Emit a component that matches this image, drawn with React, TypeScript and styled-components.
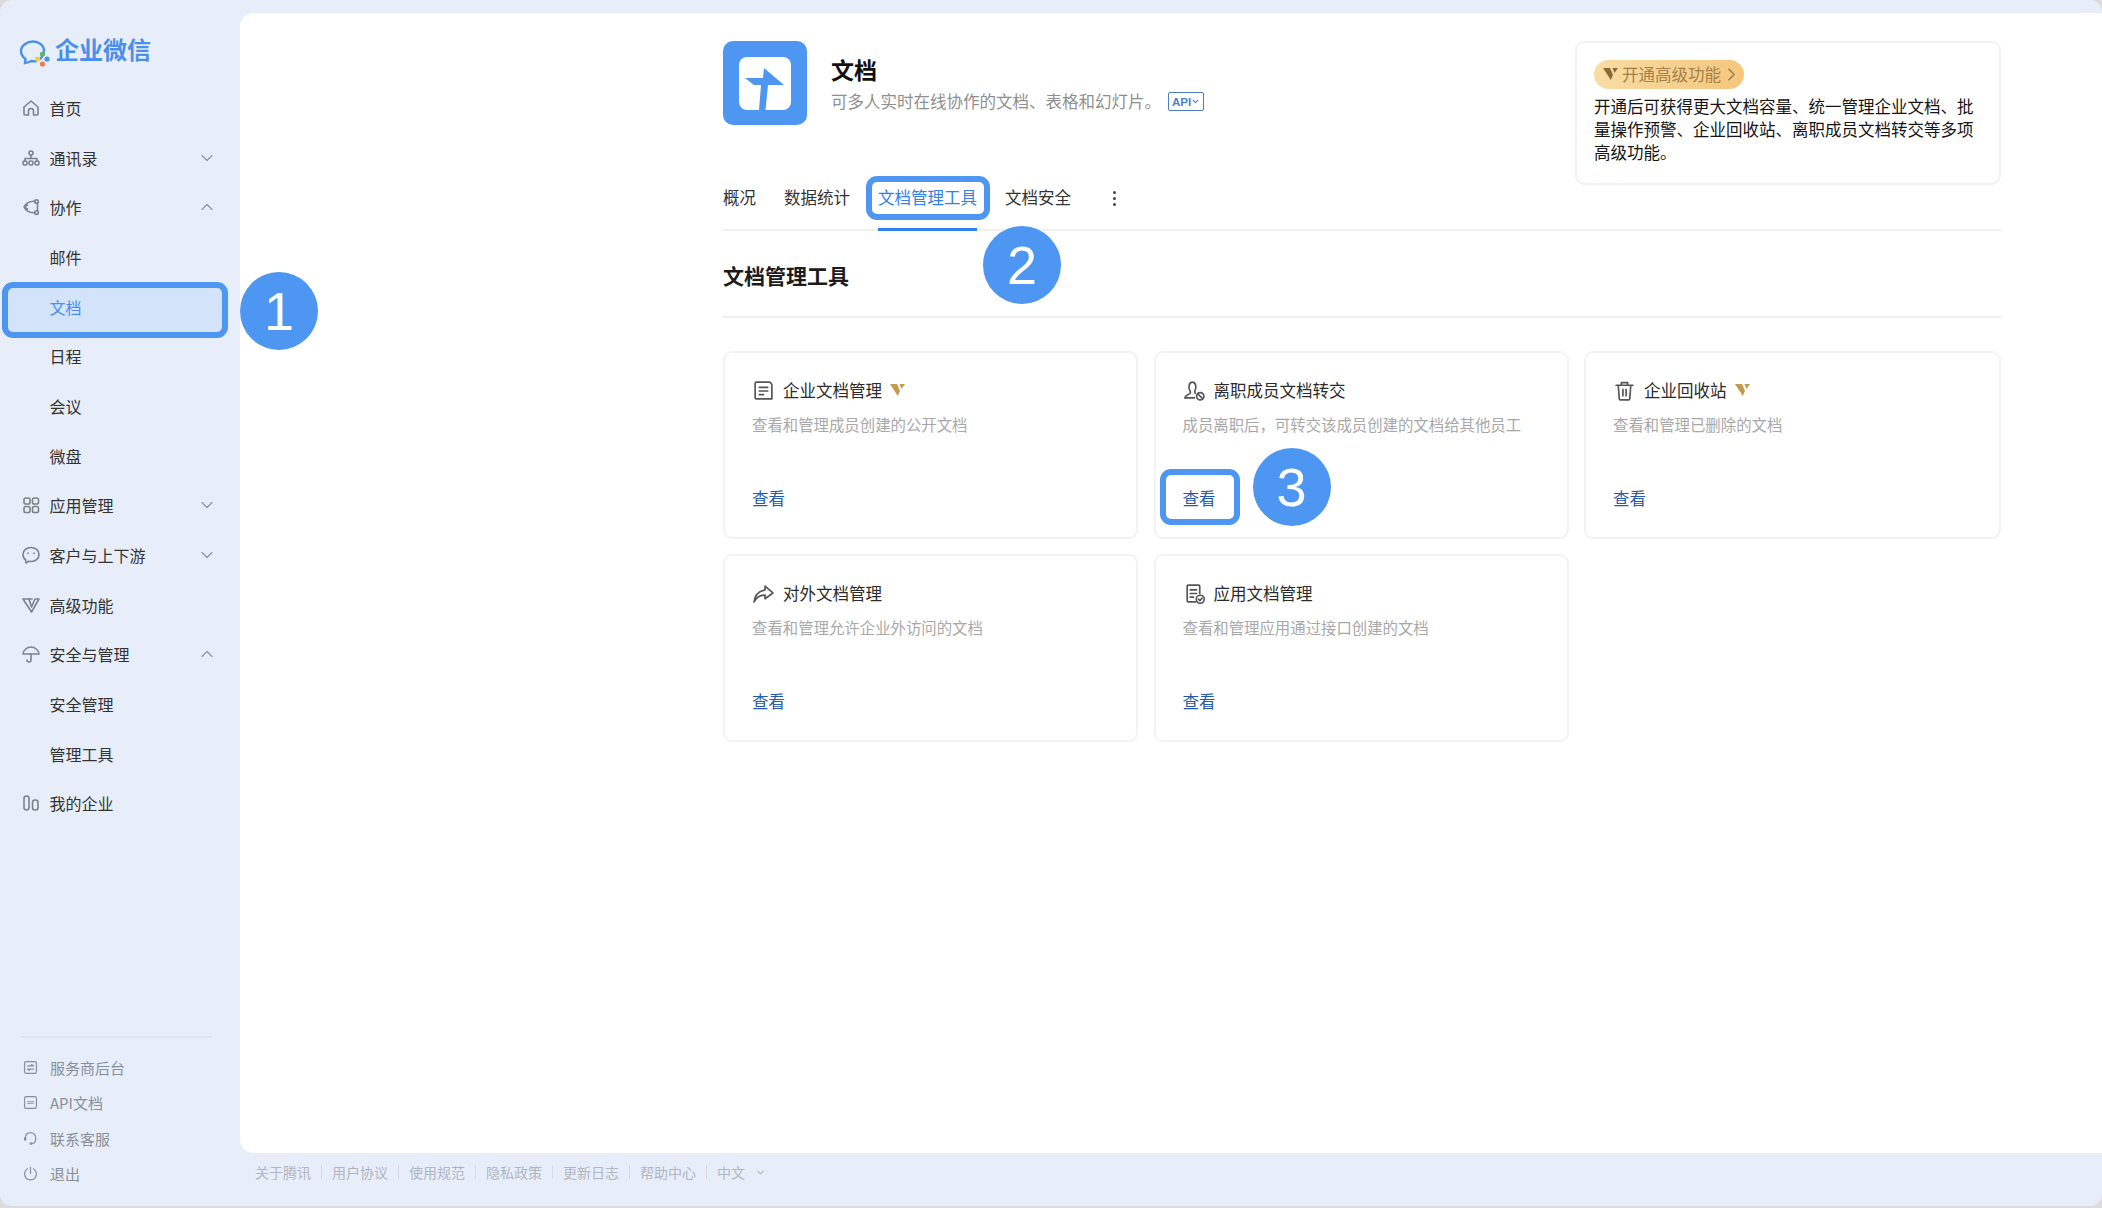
import styled, { createGlobalStyle } from "styled-components"
import { ChevronDown, ChevronUp, ChevronRight } from "lucide-react"
import { Fragment } from "react"
import type { ReactNode } from "react"

const GlobalStyle = createGlobalStyle`
    html, body {
        margin: 0;
        padding: 0;
        background: #dcdcdc;
    }
    * {
        box-sizing: border-box;
    }
    body {
        font-family: "Noto Sans CJK SC", "Liberation Sans", sans-serif;
    }
`

const BLUE = "#4d96f2"

const Shell = styled.div`
    width: 2102px;
    height: 1206px;
    display: grid;
    grid-template-columns: 240px 1fr;
    background: #e7eefa;
    border-radius: 12px;
`

const Sidebar = styled.aside`
    display: flex;
    flex-direction: column;
    padding-bottom: 15px;
`

const Brand = styled.div`
    height: 83px;
    padding: 20px 0 0 18px;
    display: flex;
    align-items: flex-start;
    gap: 3px;
    color: #4a8fe9;
    font-size: 24px;
    font-weight: 700;
    line-height: 64px;
    svg {
        margin-top: 19px;
    }
    span {
        margin-top: -3px;
    }
`

const NavRow = styled.div`
    position: relative;
    height: 49.7px;
    display: flex;
    align-items: center;
    padding-left: 49.5px;
    font-size: 16px;
    color: #333;
    > svg:first-child {
        position: absolute;
        left: 20.5px;
    }
`

const NavLabel = styled.span<{ $active?: boolean }>`
    position: relative;
    z-index: 1;
    color: ${props => props.$active ? "#4a8fe9" : "#333"};
`

const NavChevron = styled.span`
    position: absolute;
    left: 197px;
    display: flex;
    color: #8d929b;
`

const SideBottom = styled.div`
    margin-top: auto;
    margin-left: 21px;
    width: 191px;
    border-top: 2px solid #dfe4ee;
    padding-top: 12px;
`

const SideLink = styled.div`
    height: 35.3px;
    display: flex;
    align-items: center;
    gap: 11px;
    margin-left: 1px;
    font-size: 15px;
    color: #8a8f99;
`

const Content = styled.div`
    display: flex;
    flex-direction: column;
    padding-top: 13px;
`

const Panel = styled.main`
    flex: 1;
    background: #fff;
    border-radius: 14px 0 0 14px;
    padding: 28px 0 0 483px;
`

const Column = styled.div`
    width: 1278px;
`

const Header = styled.header`
    height: 135px;
    display: flex;
    justify-content: space-between;
    align-items: flex-start;
`

const AppInfo = styled.div`
    display: flex;
    gap: 24px;
`

const AppLogo = styled.div`
    width: 84px;
    height: 84px;
    border-radius: 10px;
    background: ${BLUE};
    display: flex;
    align-items: center;
    justify-content: center;
`

const AppTitle = styled.h1`
    margin: 10.5px 0 0;
    font-size: 23px;
    line-height: 34px;
    font-weight: 700;
    color: #111;
`

const AppDesc = styled.p`
    margin: 2px 0 0;
    display: flex;
    align-items: center;
    gap: 7px;
    font-size: 16.5px;
    line-height: 26px;
    color: #8f8f8f;
`

const ApiBadge = styled.span`
    width: 36px;
    height: 19px;
    margin-top: 2px;
    display: inline-flex;
    align-items: center;
    justify-content: center;
    border: 1.5px solid #4a7fc4;
    border-radius: 2px;
    color: #4a7fc4;
    font-size: 11.5px;
    font-weight: 700;
    font-family: "Liberation Sans", sans-serif;
`

const PremiumCard = styled.aside`
    width: 426px;
    height: 144px;
    padding: 17px 16px 0 17px;
    border: 2px solid #f2f2f2;
    border-radius: 9px;
`

const PremiumPill = styled.div`
    width: 150px;
    height: 29px;
    display: flex;
    align-items: center;
    gap: 3px;
    padding: 0 0 2px 9px;
    border-radius: 15px;
    background: linear-gradient(90deg, #f9dca5, #f4c77c);
    color: #a5824a;
    font-size: 16.5px;
    white-space: nowrap;
    svg:last-child {
        margin-left: -3px;
        margin-top: 2px;
    }
`

const PremiumText = styled.p`
    margin: 6px 0 0;
    font-size: 16.5px;
    line-height: 23px;
    color: #151515;
`

const TabBar = styled.nav`
    height: 55px;
    display: flex;
    gap: 28px;
    border-bottom: 2px solid #f0f0f0;
`

const Tab = styled.div<{ $active?: boolean }>`
    position: relative;
    height: 55px;
    line-height: 43px;
    font-size: 16.5px;
    color: ${props => props.$active ? "#2f81ed" : "#333"};
    border-bottom: 3px solid ${props => props.$active ? "#2f81ed" : "transparent"};
`

const TabDots = styled.div`
    margin-left: 14px;
    height: 44px;
    display: flex;
    flex-direction: column;
    justify-content: center;
    gap: 3px;
    i {
        width: 3px;
        height: 3px;
        border-radius: 50%;
        background: #444;
    }
`

const SectionTitle = styled.h2`
    margin: 0;
    height: 87px;
    padding-top: 26.5px;
    font-size: 21px;
    line-height: 34px;
    font-weight: 700;
    color: #1c1c1c;
    border-bottom: 2px solid #f0f0f0;
`

const CardGrid = styled.div`
    margin-top: 33px;
    display: grid;
    grid-template-columns: 415px 415px 1fr;
    grid-auto-rows: 188px;
    gap: 15px 15.5px;
`

const Card = styled.article`
    display: flex;
    flex-direction: column;
    padding: 25px 27px 27px 27px;
    border: 2px solid #f3f3f3;
    border-radius: 9px;
`

const CardTitle = styled.div`
    height: 24px;
    display: flex;
    align-items: center;
    gap: 8px;
    font-size: 16.5px;
    color: #2b2b2b;
    svg {
        flex-shrink: 0;
    }
`

const CardDesc = styled.p`
    margin: 10px 0 0;
    font-size: 15.4px;
    line-height: 24px;
    color: #a8a8a8;
`

const CardLink = styled.a`
    position: relative;
    margin-top: auto;
    width: 33px;
    font-size: 16.5px;
    line-height: 24px;
    color: #245aa8;
`

const Ring = styled.span<{ $top: number; $left: number; $width: number; $height: number; $fill?: string }>`
    position: absolute;
    top: ${props => props.$top}px;
    left: ${props => props.$left}px;
    width: ${props => props.$width}px;
    height: ${props => props.$height}px;
    border: 6px solid ${BLUE};
    border-radius: 11px;
    background: ${props => props.$fill || "transparent"};
`

const Marker = styled.span<{ $top: number; $left: number }>`
    position: absolute;
    z-index: 2;
    top: ${props => props.$top}px;
    left: ${props => props.$left}px;
    width: 78px;
    height: 78px;
    border-radius: 50%;
    background: ${BLUE};
    color: #fff;
    display: flex;
    align-items: center;
    justify-content: center;
    font-family: "Liberation Sans", sans-serif;
    font-size: 54px;
    line-height: 1;
`

const Footer = styled.footer`
    height: 53px;
    display: flex;
    align-items: center;
    gap: 10px;
    padding: 0 0 16px 15px;
    font-size: 14px;
    color: #b1b6c0;
    svg {
        color: #8a8f99;
        margin-top: 2px;
    }
`

const FooterSep = styled.i`
    width: 1px;
    height: 14px;
    background: #d5dae3;
`

const iconProps = {
    width: 20,
    height: 20,
    viewBox: "0 0 20 20",
    fill: "none",
    stroke: "#7d8289",
    strokeWidth: 1.6,
    strokeLinecap: "round" as const,
    strokeLinejoin: "round" as const,
}

const navIcons: Record<string, ReactNode> = {
    home: <svg {...iconProps}><path d="M3 9 10 3l7 6v7a1 1 0 0 1-1 1h-3.500v-4a2.500 2.500 0 0 0-5 0v4H4a1 1 0 0 1-1-1z" /></svg>,
    org: <svg {...iconProps}><circle cx="10" cy="5" r="2" /><path d="M10 7v3M4 13v-2.500h12V13" /><rect x="2" y="13" width="4" height="4" rx="1.500" /><rect x="8" y="13" width="4" height="4" rx="1.500" /><rect x="14" y="13" width="4" height="4" rx="1.500" /></svg>,
    share: <svg {...iconProps}><circle cx="15.500" cy="4.500" r="1.800" /><circle cx="15.500" cy="15.500" r="1.800" /><path d="M13.800 4.200C9 4 5 6 3 10c2 4 6 6 10.800 5.800M3 10l3.500-2M3 10l3.500 2" /><path d="M16.500 6.500v7" /></svg>,
    apps: <svg {...iconProps}><rect x="3" y="3" width="6" height="6" rx="1.800" /><rect x="11.500" y="3" width="6" height="6" rx="1.800" /><rect x="3" y="11.500" width="6" height="6" rx="1.800" /><rect x="11.500" y="11.500" width="6" height="6" rx="1.800" /></svg>,
    chat: <svg {...iconProps}><path d="M10 2.500c4.400 0 8 2.900 8 7s-3.600 7-8 7c-.8 0-1.500-.1-2.200-.3L5 18l-.3-3C3 13.700 2 11.800 2 9.500c0-4.100 3.600-7 8-7z" /><path d="M7 8v.5M13 8v.5" /></svg>,
    vip: <svg {...iconProps}><path d="M2 4h6l2.500 8L14 4h4l-7.500 13z" /><path d="M8 4l3 0" /></svg>,
    umbrella: <svg {...iconProps}><path d="M2 10c.5-4 4-7 8-7s7.500 3 8 7H2z" /><path d="M10 10v6a2 2 0 0 1-4 0" /></svg>,
    bars: <svg {...iconProps}><rect x="3" y="3" width="5" height="14" rx="2.500" /><rect x="11.500" y="7" width="5.500" height="10" rx="2.500" /></svg>,
}

const smallProps = { ...iconProps, width: 17, height: 17, stroke: "#8a8f99", strokeWidth: 1.4 }

const sideIcons: Record<string, ReactNode> = {
    service: <svg {...smallProps}><rect x="3" y="3" width="14" height="14" rx="2" /><path d="M6.500 8h7M6.500 12h7M11 6.500 13.500 8M9 13.500 6.500 12" /></svg>,
    api: <svg {...smallProps}><rect x="3" y="3" width="14" height="14" rx="2" /><path d="M6.500 9h7M6.500 11h7" strokeWidth="1" /></svg>,
    support: <svg {...smallProps}><path d="M4 11V9a6 6 0 0 1 12 0v2" /><path d="M16 11c0 3-2 5-4.500 5" /><circle cx="10.500" cy="16" r="1" /><rect x="3" y="9" width="1.500" height="3" rx=".7" /></svg>,
    power: <svg {...smallProps}><path d="M6.500 4.500a7 7 0 1 0 7 0M10 2.500V10" /></svg>,
}

const cardIconProps = { ...iconProps, width: 23, height: 23, viewBox: "0 0 22 22", stroke: "#555" }

const cardIcons: Record<string, ReactNode> = {
    doc: <svg {...cardIconProps}><path d="M4 3h13l2 2v14H4a1 1 0 0 1-1-1V4a1 1 0 0 1 1-1z" /><path d="M7 8h8M7 11.500h8M7 15h4" /></svg>,
    leave: <svg {...cardIconProps}><path d="M2 18c0-2.500 3-3 4.500-4 .8-.6.7-1.800 0-3C5 9 5.500 3 9 3s4 6 2.500 8c-.6 1-.5 2 .2 2.800" /><path d="M2 18h9" /><circle cx="16.500" cy="16.500" r="3.500" /><path d="m14.200 14.500 4.500 4" /></svg>,
    trash: <svg {...cardIconProps}><path d="M3 6h16M8 6V3.500h6V6M5 6l1 13a1 1 0 0 0 1 1h8a1 1 0 0 0 1-1l1-13M9.500 10v6M12.500 10v6" /></svg>,
    forward: <svg {...cardIconProps}><path d="M12.500 4 20 10.500 12.500 16v-3.500C8 12.500 4.500 14 2 19c.5-6 4-10 10.500-11.500z" /></svg>,
    appDoc: <svg {...cardIconProps}><path d="M12 19H5a1 1 0 0 1-1-1V4a1 1 0 0 1 1-1h10a1 1 0 0 1 1 1v7" /><path d="M7 7.500h6M7 11h6M7 14.500h3" /><circle cx="16.500" cy="16.500" r="3.800" /><path d="m14.800 16.500 1.300 1.300 2.100-2.300" /></svg>,
}

function VipMark({ color = "#c49a4e" }: { color?: string }) {
    return (
        <svg width="16" height="14" viewBox="0 0 16 14">
            <path d="M0 1h7l3 7-2.200 5z" fill={color} />
            <path d="M9.500 1H15l-3.400 5z" fill={color} />
        </svg>
    )
}

function BrandLogo() {
    return (
        <svg width="34" height="30" viewBox="0 0 34 30" fill="none">
            <path d="M22 20c2-2 4-4.500 4-8 0-5.500-5-9.500-11-9.500S3 6.500 3 12c0 3.500 1.800 6 4.500 8L7 24c3-.3 5-1.500 6-2 2 .4 3 .4 5 .2" stroke="#4a8fe9" strokeWidth="2.400" strokeLinecap="round" />
            <circle cx="19.500" cy="20" r="2.600" fill="#f4cc45" />
            <circle cx="24.500" cy="15" r="2.600" fill="#5cb85c" />
            <circle cx="29" cy="20" r="2.600" fill="#4a8fe9" />
            <circle cx="24.500" cy="25" r="2.600" fill="#ee7b4a" />
        </svg>
    )
}

type NavItem = { label: string; icon?: string; open?: boolean }

const navItems: NavItem[] = [
    { label: "首页", icon: "home" },
    { label: "通讯录", icon: "org", open: false },
    { label: "协作", icon: "share", open: true },
    { label: "邮件" },
    { label: "文档" },
    { label: "日程" },
    { label: "会议" },
    { label: "微盘" },
    { label: "应用管理", icon: "apps", open: false },
    { label: "客户与上下游", icon: "chat", open: false },
    { label: "高级功能", icon: "vip" },
    { label: "安全与管理", icon: "umbrella", open: true },
    { label: "安全管理" },
    { label: "管理工具" },
    { label: "我的企业", icon: "bars" },
]

const sideLinks = [
    { label: "服务商后台", icon: "service" },
    { label: "API文档", icon: "api" },
    { label: "联系客服", icon: "support" },
    { label: "退出", icon: "power" },
]

const cards = [
    { title: "企业文档管理", icon: "doc", vip: true, desc: "查看和管理成员创建的公开文档" },
    { title: "离职成员文档转交", icon: "leave", desc: "成员离职后，可转交该成员创建的文档给其他员工", marked: true },
    { title: "企业回收站", icon: "trash", vip: true, desc: "查看和管理已删除的文档" },
    { title: "对外文档管理", icon: "forward", desc: "查看和管理允许企业外访问的文档" },
    { title: "应用文档管理", icon: "appDoc", desc: "查看和管理应用通过接口创建的文档" },
]

const footerLinks = ["关于腾讯", "用户协议", "使用规范", "隐私政策", "更新日志", "帮助中心"]

export default function App() {
    return (
        <>
            <GlobalStyle />
            <Shell>
                <Sidebar>
                    <Brand>
                        <BrandLogo />
                        <span>企业微信</span>
                    </Brand>
                    {navItems.map(item => (
                        <NavRow key={item.label}>
                            {item.icon && navIcons[item.icon]}
                            {item.label === "文档" && (
                                <>
                                    <Ring $top={0.5} $left={2} $width={226} $height={56} $fill="#d3e3fa" />
                                    <Marker $top={-10} $left={240}>1</Marker>
                                </>
                            )}
                            <NavLabel $active={item.label === "文档"}>{item.label}</NavLabel>
                            {item.open !== undefined && (
                                <NavChevron>
                                    {item.open ? <ChevronUp size={20} strokeWidth={1.4} /> : <ChevronDown size={20} strokeWidth={1.4} />}
                                </NavChevron>
                            )}
                        </NavRow>
                    ))}
                    <SideBottom>
                        {sideLinks.map(link => (
                            <SideLink key={link.label}>
                                {sideIcons[link.icon]}
                                {link.label}
                            </SideLink>
                        ))}
                    </SideBottom>
                </Sidebar>
                <Content>
                    <Panel>
                        <Column>
                            <Header>
                                <AppInfo>
                                    <AppLogo>
                                        <svg width="52" height="53" viewBox="0 0 52 53">
                                            <rect width="52" height="53" rx="8" fill="#fff" />
                                            <path d="M25 11 45 28H29l-2.500 25H20l2-25-7 0L6 21l18 0z" fill={BLUE} />
                                        </svg>
                                    </AppLogo>
                                    <div>
                                        <AppTitle>文档</AppTitle>
                                        <AppDesc>
                                            可多人实时在线协作的文档、表格和幻灯片。
                                            <ApiBadge>API<ChevronDown size={9} strokeWidth={3} /></ApiBadge>
                                        </AppDesc>
                                    </div>
                                </AppInfo>
                                <PremiumCard>
                                    <PremiumPill>
                                        <VipMark color="#8a6a35" />
                                        开通高级功能
                                        <ChevronRight size={21} strokeWidth={2} />
                                    </PremiumPill>
                                    <PremiumText>
                                        开通后可获得更大文档容量、统一管理企业文档、批量操作预警、企业回收站、离职成员文档转交等多项高级功能。
                                    </PremiumText>
                                </PremiumCard>
                            </Header>
                            <TabBar>
                                <Tab>概况</Tab>
                                <Tab>数据统计</Tab>
                                <Tab $active>
                                    文档管理工具
                                    <Ring $top={0} $left={-12} $width={124} $height={44} />
                                    <Marker $top={50} $left={105}>2</Marker>
                                </Tab>
                                <Tab>文档安全</Tab>
                                <TabDots><i /><i /><i /></TabDots>
                            </TabBar>
                            <SectionTitle>文档管理工具</SectionTitle>
                            <CardGrid>
                                {cards.map(card => (
                                    <Card key={card.title}>
                                        <CardTitle>
                                            {cardIcons[card.icon]}
                                            {card.title}
                                            {card.vip && <VipMark />}
                                        </CardTitle>
                                        <CardDesc>{card.desc}</CardDesc>
                                        <CardLink>
                                            查看
                                            {card.marked && (
                                                <>
                                                    <Ring $top={-17} $left={-23} $width={80} $height={56} />
                                                    <Marker $top={-38} $left={70}>3</Marker>
                                                </>
                                            )}
                                        </CardLink>
                                    </Card>
                                ))}
                            </CardGrid>
                        </Column>
                    </Panel>
                    <Footer>
                        {footerLinks.map(link => (
                            <Fragment key={link}>
                                <span>{link}</span>
                                <FooterSep />
                            </Fragment>
                        ))}
                        <span>中文</span>
                        <ChevronDown size={11} strokeWidth={2} />
                    </Footer>
                </Content>
            </Shell>
        </>
    )
}
